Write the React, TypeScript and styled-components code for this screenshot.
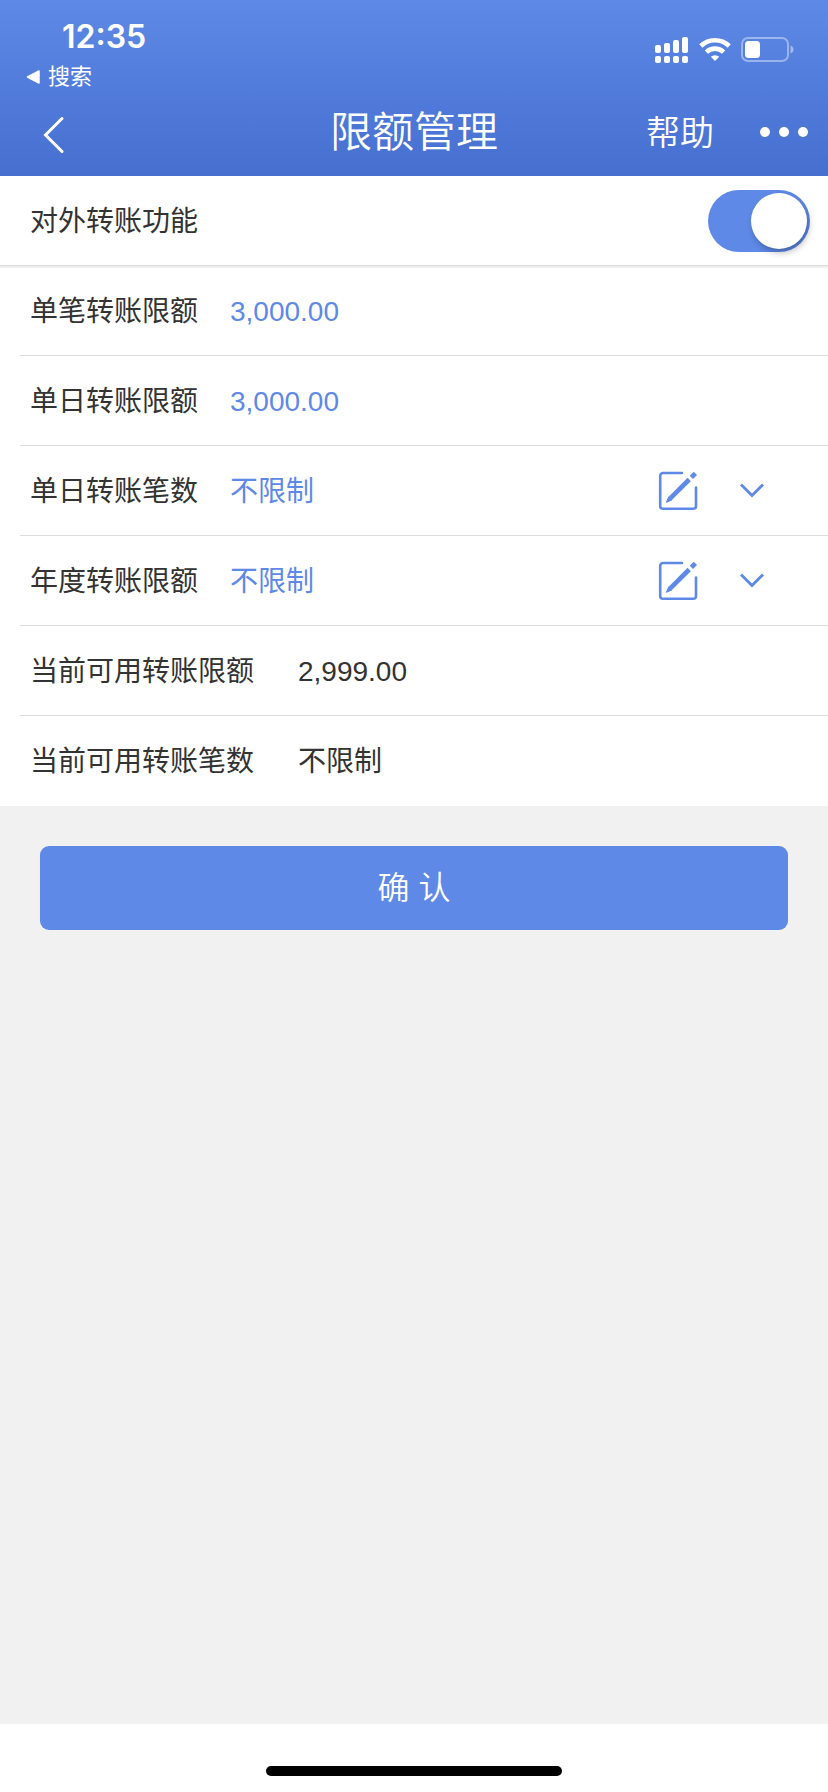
import React, { useState } from "react";
import styled, { createGlobalStyle } from "styled-components";

const blue = "#5e89e6";

const GlobalStyle = createGlobalStyle`
  *, *::before, *::after { box-sizing: border-box; }
  body {
    margin: 0;
    background: #f1f1f1;
    color: #333;
    font-family: "Liberation Sans", "Noto Sans CJK SC", sans-serif;
    font-size: 28px;
  }
  button { font-family: inherit; }
`;

const Page = styled.div`
  display: flex;
  flex-direction: column;
  min-height: 100vh;
`;

const Header = styled.header`
  color: #fff;
  background: linear-gradient(#5e89e6, #466fd0);
`;

const StatusBar = styled.div`
  display: flex;
  justify-content: space-between;
  align-items: flex-start;
  height: 90px;
  padding: 19px 34px 0 26px;
`;

const StatusLeft = styled.div`
  display: flex;
  flex-direction: column;
  gap: 10px;
`;

const Time = styled.time`
  padding-left: 36px;
  font-family: Inter, sans-serif;
  font-size: 32px;
  font-weight: 600;
  line-height: 36px;
`;

const ReturnLink = styled.a`
  display: flex;
  align-items: center;
  gap: 8px;
  color: inherit;
  font-size: 22px;
  line-height: 24px;
  text-decoration: none;
`;

const StatusIcons = styled.div`
  display: flex;
  align-items: center;
  gap: 10px;
  padding-top: 18px;
`;

const NavBar = styled.nav`
  display: grid;
  grid-template-columns: 1fr auto 1fr;
  align-items: center;
  height: 86px;
  padding: 0 20px;
`;

const NavActions = styled.div`
  display: flex;
  align-items: center;
  justify-content: flex-end;
  gap: 46px;
`;

const PlainButton = styled.button`
  display: inline-flex;
  align-items: center;
  justify-content: center;
  justify-self: start;
  padding: 0;
  border: 0;
  background: none;
  color: inherit;
  font-size: 34px;
  font-weight: 350;
  line-height: 44px;
  cursor: pointer;
`;

const Title = styled.h1`
  margin: 0;
  font-size: 42px;
  font-weight: 350;
  line-height: 56px;
`;

const Main = styled.main`
  flex: 1;
`;

const SwitchRow = styled.div`
  display: flex;
  align-items: center;
  justify-content: space-between;
  height: 90px;
  padding: 0 18px 0 30px;
  background: #fff;
  border-bottom: 1px solid #dcdcdc;
`;

const SwitchLabel = styled.label`
  padding-top: 2px;
  line-height: 40px;
`;

const Switch = styled.input`
  appearance: none;
  display: flex;
  align-items: center;
  width: 102px;
  height: 62px;
  margin: 0;
  padding: 0 3px;
  border-radius: 31px;
  background: #ccc;
  cursor: pointer;

  &::before {
    content: "";
    width: 56px;
    height: 56px;
    border-radius: 50%;
    background: #fff;
    box-shadow: 2px 4px 6px rgba(0, 0, 0, 0.25);
  }

  &:checked {
    justify-content: flex-end;
    background: ${blue};
  }
`;

const Limits = styled.dl`
  margin: 0;
  padding-left: 20px;
  background: #fff;
  box-shadow: inset 0 2px 0 #eee;
`;

const LimitRow = styled.div`
  display: flex;
  align-items: center;
  height: 90px;
  padding: 0 62px 0 10px;
  border-bottom: 1px solid #dcdcdc;

  &:last-child { border-bottom-color: transparent; }
`;

const Name = styled.dt<{ $wide: boolean }>`
  width: ${(p) => (p.$wide ? 268 : 200)}px;
  padding-top: 2px;
  line-height: 40px;
`;

const Value = styled.dd<{ $accent: boolean }>`
  flex: 1;
  margin: 0;
  padding-top: 2px;
  color: ${(p) => (p.$accent ? blue : "#333")};
  line-height: 40px;
`;

const RowActions = styled.div`
  display: flex;
  align-items: center;
  gap: 40px;
  color: ${blue};
`;

const ConfirmArea = styled.div`
  padding: 40px;
`;

const ConfirmButton = styled.button`
  width: 100%;
  height: 84px;
  border: 0;
  border-radius: 9px;
  background: ${blue};
  color: #fff;
  font-size: 32px;
  font-weight: 350;
  line-height: 44px;
  cursor: pointer;
`;

const HomeBar = styled.footer`
  display: flex;
  justify-content: center;
  padding: 42px 0 16px;
  background: #fff;
`;

const HomeIndicator = styled.div`
  width: 296px;
  height: 10px;
  border-radius: 5px;
  background: #000;
`;

const SignalIcon = () => (
  <svg width="34" height="27" viewBox="0 0 34 27" fill="currentColor" aria-hidden="true">
    <rect x="0" y="8" width="6" height="8" rx="2" />
    <rect x="9" y="6" width="6" height="10" rx="2" />
    <rect x="18" y="3" width="6" height="13" rx="2" />
    <rect x="27" y="0" width="6" height="16" rx="2" />
    {[0, 9, 18, 27].map((x) => (
      <rect key={x} x={x} y="19" width="6" height="7" rx="2" />
    ))}
  </svg>
);

const WifiIcon = () => (
  <svg width="32" height="27" viewBox="0 0 32 27" aria-hidden="true">
    <g fill="none" stroke="currentColor" strokeWidth="4.6">
      <path d="M1.8 9a20.3 20.3 0 0 1 28.4 0" />
      <path d="M7.4 15.200a12.2 12.2 0 0 1 17.2 0" />
    </g>
    <path d="M11.8 19.800a6.200 6.200 0 0 1 8.400 0L16 24z" fill="currentColor" />
  </svg>
);

const BatteryIcon = () => (
  <svg width="53" height="27" viewBox="0 0 53 27" aria-hidden="true">
    <rect x="1" y="1" width="46" height="23" rx="6" fill="none" stroke="#fff" strokeOpacity=".4" strokeWidth="2" />
    <path d="M49.5 8.500q3 1.200 3 4t-3 4z" fill="#fff" fillOpacity=".45" />
    <rect x="4" y="4" width="15" height="17" rx="3.500" fill="#fff" />
  </svg>
);

const EditIcon = () => (
  <svg width="40" height="40" viewBox="0 0 40 40" fill="none" stroke="currentColor" aria-hidden="true">
    <path d="M24 2H5a2.800 2.800 0 0 0-2.800 2.800V35A2.800 2.800 0 0 0 5 37.800h30.200A2.800 2.800 0 0 0 38 35V16.500" strokeWidth="2.600" strokeLinecap="round" />
    <path d="M31.200 8.500 12.500 27.200" strokeWidth="4.600" />
    <path d="m10.800 25.700 3.200 3.200-5.600 2.400z" fill="currentColor" strokeWidth="1" />
    <path d="m33.400 6.400 4-4" strokeWidth="4.600" />
  </svg>
);

const ChevronDownIcon = () => (
  <svg width="28" height="20" viewBox="0 0 28 20" fill="none" stroke="currentColor" strokeWidth="2.800" aria-hidden="true">
    <path d="m3 3.500 11 11 11-11" />
  </svg>
);

interface Limit {
  name: string;
  value: string;
  accent?: boolean;
  wide?: boolean;
  editable?: boolean;
}

const limits: Limit[] = [
  { name: "单笔转账限额", value: "3,000.00", accent: true },
  { name: "单日转账限额", value: "3,000.00", accent: true },
  { name: "单日转账笔数", value: "不限制", accent: true, editable: true },
  { name: "年度转账限额", value: "不限制", accent: true, editable: true },
  { name: "当前可用转账限额", value: "2,999.00", wide: true },
  { name: "当前可用转账笔数", value: "不限制", wide: true },
];

export default function App() {
  const [enabled, setEnabled] = useState(true);

  return (
    <Page>
      <GlobalStyle />
      <Header>
        <StatusBar>
          <StatusLeft>
            <Time>12:35</Time>
            <ReturnLink href="#search">
              <svg width="14" height="16" viewBox="0 0 14 16" aria-hidden="true">
                <path d="M13 2v12L1.500 8z" fill="currentColor" stroke="currentColor" strokeWidth="1.500" strokeLinejoin="round" />
              </svg>
              搜索
            </ReturnLink>
          </StatusLeft>
          <StatusIcons>
            <SignalIcon />
            <WifiIcon />
            <BatteryIcon />
          </StatusIcons>
        </StatusBar>
        <NavBar>
          <PlainButton type="button" aria-label="返回">
            <svg width="56" height="44" viewBox="0 0 56 44" fill="none" stroke="currentColor" strokeWidth="3" strokeLinecap="round" aria-hidden="true">
              <path d="M42 7.500 25.500 24 42 40.500" />
            </svg>
          </PlainButton>
          <Title>限额管理</Title>
          <NavActions>
            <PlainButton type="button">帮助</PlainButton>
            <PlainButton type="button" aria-label="更多">
              <svg width="48" height="44" viewBox="0 0 48 44" fill="currentColor" aria-hidden="true">
                <circle cx="5" cy="21" r="5" />
                <circle cx="24" cy="21" r="5" />
                <circle cx="43" cy="21" r="5" />
              </svg>
            </PlainButton>
          </NavActions>
        </NavBar>
      </Header>

      <Main>
        <SwitchRow>
          <SwitchLabel htmlFor="transfer">对外转账功能</SwitchLabel>
          <Switch
            id="transfer"
            type="checkbox"
            role="switch"
            checked={enabled}
            onChange={(e) => setEnabled(e.target.checked)}
          />
        </SwitchRow>
        <Limits>
          {limits.map((limit) => (
            <LimitRow key={limit.name}>
              <Name $wide={!!limit.wide}>{limit.name}</Name>
              <Value $accent={!!limit.accent}>{limit.value}</Value>
              {limit.editable && (
                <RowActions>
                  <PlainButton type="button" aria-label={`编辑${limit.name}`}>
                    <EditIcon />
                  </PlainButton>
                  <PlainButton type="button" aria-label={`展开${limit.name}`}>
                    <ChevronDownIcon />
                  </PlainButton>
                </RowActions>
              )}
            </LimitRow>
          ))}
        </Limits>
        <ConfirmArea>
          <ConfirmButton type="button">确 认</ConfirmButton>
        </ConfirmArea>
      </Main>

      <HomeBar>
        <HomeIndicator />
      </HomeBar>
    </Page>
  );
}
